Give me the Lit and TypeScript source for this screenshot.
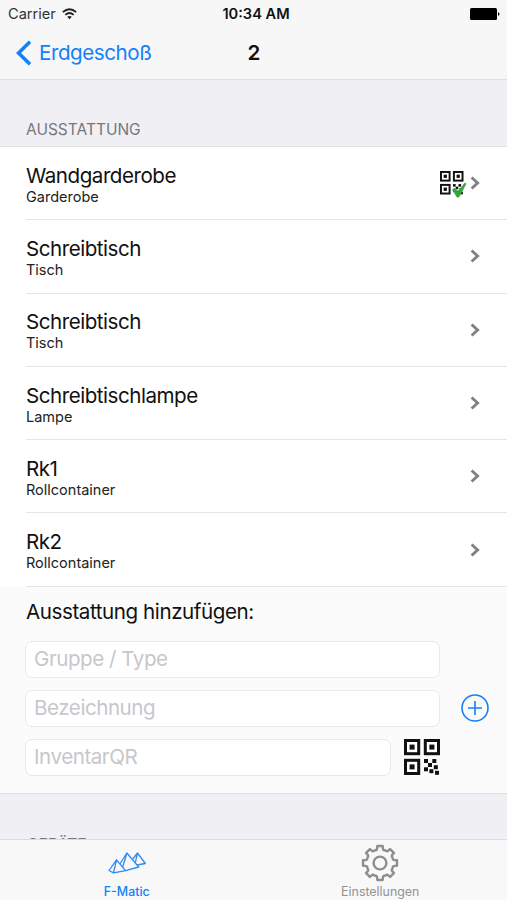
import { LitElement, html, css, svg } from "lit";
import { customElement, property } from "lit/decorators.js";

const gearPath = (() => {
  const n = 8;
  const p = (deg: number, r: number) => {
    const a = ((deg - 90) * Math.PI) / 180;
    return `${(19 + r * Math.cos(a)).toFixed(2)} ${(19 + r * Math.sin(a)).toFixed(2)}`;
  };
  let d = "";
  for (let i = 0; i < n; i++) {
    const a = (i * 360) / n;
    d += `${i ? "L" : "M"}${p(a - 9, 17.2)} L${p(a + 9, 17.2)} L${p(a + 11, 15)} Q${p(a + 14, 12.9)} ${p(a + 20, 13.6)} L${p(a + 25, 13.6)} Q${p(a + 31, 12.9)} ${p(a + 34, 15)} `;
  }
  return d + "Z";
})();

@customElement("qr-icon")
export class QrIcon extends LitElement {
  @property({ type: Number }) size = 36;
  @property({ type: Boolean }) checked = false;
  static styles = css`
    :host { display: block; flex: none; }
    svg { display: block; overflow: visible; }
  `;
  render() {
    const finder = (x: number, y: number) => svg`
      <rect x=${x + 1.5} y=${y + 1.5} width="13.2" height="13.2" fill="#fff" stroke="#111" stroke-width="3"/>
      <rect x=${x + 5.6} y=${y + 5.6} width="5" height="5" fill="#111"/>`;
    const dots = [[20, 20], [28.3, 20], [24, 24], [29.8, 26.2], [20, 28.3], [25.4, 30.2], [31, 31.8]];
    return html`<svg width=${this.size} height=${this.size} viewBox="0 0 36 36">
      ${finder(0, 0)}${finder(19.8, 0)}${finder(0, 19.8)}
      ${dots.map(([x, y]) => svg`<rect x=${x} y=${y} width="4" height="4" fill="#111"/>`)}
      ${this.checked
        ? svg`<path d="M19 28.5 L23 26.5 L27 32 L38 18.5 L40 19.5 L29 40 L26 40 Z" fill="#30a83a" stroke="#30a83a" stroke-width="1"/>`
        : null}
    </svg>`;
  }
}

@customElement("equipment-row")
export class EquipmentRow extends LitElement {
  @property() name = "";
  @property() kind = "";
  @property({ type: Boolean }) tagged = false;
  static styles = css`
    :host { display: flex; align-items: center; height: 73.3px; margin-left: 26px; padding-right: 27px; box-sizing: border-box; border-bottom: 1.3px solid #e5e5e7; }
    .text { flex: 1; padding-top: 1.2px; }
    .name { font-size: 20.6px; line-height: 25px; letter-spacing: -0.48px; color: #111; }
    .kind { font-size: 14.5px; line-height: 17px; color: #222; }
    qr-icon { margin-right: 6.5px; }
    svg { display: block; }
  `;
  render() {
    return html`
      <div class="text"><div class="name">${this.name}</div><div class="kind">${this.kind}</div></div>
      ${this.tagged ? html`<qr-icon size="23.5" checked></qr-icon>` : null}
      <svg width="10" height="14" viewBox="0 0 10 14"><path d="M1.6 1.5 L7.6 7 L1.6 12.5" fill="none" stroke="#808084" stroke-width="2.9"/></svg>`;
  }
}

@customElement("app-root")
export class AppRoot extends LitElement {
  static styles = css`
    :host { display: flex; flex-direction: column; height: 900px; width: 507px; overflow: hidden; background: #efeff4; font-family: Inter, "Liberation Sans", sans-serif; color: #111; box-sizing: border-box; }
    svg { display: block; flex: none; }
    .top { flex: none; height: 80px; box-sizing: border-box; background: #f7f7f8; border-bottom: 1.5px solid #dfdfe2; }
    .status { display: grid; grid-template-columns: 1fr auto 1fr; align-items: center; height: 27px; padding: 0 7px 0 8px; font-size: 14.6px; }
    .carrier { display: flex; align-items: center; gap: 6px; color: #333; }
    .time { font-weight: 600; padding-left: 4px; }
    .battery { justify-self: end; }
    .nav { display: grid; grid-template-columns: 1fr auto 1fr; align-items: center; height: 51px; padding: 0 15px 0 16px; font-size: 20.6px; }
    .back { display: flex; align-items: center; gap: 7px; color: #1580f8; letter-spacing: -0.45px; }
    .title { font-weight: 600; }
    .heading { flex: none; box-sizing: border-box; height: 67px; padding: 39.5px 26px 0; border-bottom: 1.3px solid #e2e2e6; font-size: 15.5px; line-height: 20px; color: #77777c; }
    .list { flex: none; background: #fff; }
    .form { flex: none; box-sizing: border-box; height: 207px; padding: 12px 0 0 25px; background: #fbfbfb; border-bottom: 1.3px solid #dfdfe2; }
    .label { font-size: 20.6px; line-height: 26px; padding-left: 1px; letter-spacing: -0.43px; }
    .body { display: flex; align-items: center; gap: 21px; margin-top: 16px; }
    .fields { display: flex; flex-direction: column; gap: 11.6px; width: 415px; }
    .pair { display: flex; align-items: center; gap: 13px; }
    .field { flex: none; box-sizing: border-box; height: 37.3px; border: 1.2px solid #e9e9eb; border-radius: 7px; background: #fff; padding: 0 8px; font-size: 20.6px; line-height: 34.4px; letter-spacing: -0.47px; color: #c7c7cc; }
    .pair .field { flex: 1; }
    .add { margin-bottom: 1px; }
    .rest { flex: 1; min-height: 0; overflow: hidden; padding: 41px 26px 0 27px; font-size: 15.5px; line-height: 20px; color: #77777c; }
    .tabs { flex: none; display: grid; grid-template-columns: 1fr 1fr; height: 61px; box-sizing: border-box; border-top: 1.5px solid #dcdce0; background: #f8f8f8; }
    .tab { display: flex; flex-direction: column; align-items: center; justify-content: space-between; padding: 4px 0 1px; font-size: 12.4px; line-height: 14px; color: #929292; }
    .active { color: #1580f8; font-weight: 500; }
  `;
  items = [
    { name: "Wandgarderobe", kind: "Garderobe", tagged: true },
    { name: "Schreibtisch", kind: "Tisch" },
    { name: "Schreibtisch", kind: "Tisch" },
    { name: "Schreibtischlampe", kind: "Lampe" },
    { name: "Rk1", kind: "Rollcontainer" },
    { name: "Rk2", kind: "Rollcontainer" },
  ];
  render() {
    return html`
      <header class="top">
        <div class="status">
          <div class="carrier"><span>Carrier</span>
            <svg width="15" height="12" viewBox="0 0 15 12" fill="none" stroke="#222" stroke-width="1.8"><path d="M.8 4.2 Q7.5 -1.8 14.2 4.2"/><path d="M3.3 6.9 Q7.5 3.2 11.7 6.9"/><path d="M7.5 11.2 L5.2 8.8 Q7.5 7 9.8 8.8 Z" fill="#222" stroke="none"/></svg>
          </div>
          <div class="time">10:34 AM</div>
          <svg class="battery" width="30" height="12" viewBox="0 0 30 12"><rect width="27" height="12" rx="1.5"/><path d="M28 4 Q31 6 28 8Z"/></svg>
        </div>
        <div class="nav">
          <div class="back"><svg width="16" height="26" viewBox="0 0 16 26"><path d="M14 1.8 L2.5 13 L14 24.2" fill="none" stroke="#1580f8" stroke-width="3.6"/></svg><span>Erdgeschoß</span></div>
          <div class="title">2</div>
        </div>
      </header>
      <div class="heading">AUSSTATTUNG</div>
      <div class="list">${this.items.map((i) => html`<equipment-row .name=${i.name} .kind=${i.kind} .tagged=${!!i.tagged}></equipment-row>`)}</div>
      <section class="form">
        <div class="label">Ausstattung hinzufügen:</div>
        <div class="body">
          <div class="fields">
            <div class="field">Gruppe / Type</div>
            <div class="field">Bezeichnung</div>
            <div class="pair"><div class="field">InventarQR</div><qr-icon size="36"></qr-icon></div>
          </div>
          <svg class="add" width="28" height="28" viewBox="0 0 28 28" fill="none" stroke="#1580f8" stroke-width="1.6"><circle cx="14" cy="14" r="13"/><path d="M14 7v14M7 14h14"/></svg>
        </div>
      </section>
      <div class="rest">GERÄTE</div>
      <nav class="tabs">
        <div class="tab active">
          <svg width="38" height="38" viewBox="0 0 38 38" fill="none" stroke="#2f8af5" stroke-width="1.3" stroke-linejoin="round"><path d="M8.5 15.8 L1 26.5 L5.5 28.8 L17.5 26.6 Z L5.5 28.8"/><path d="M11.8 20 L18.9 9 L30.7 23 L17.5 26.6 M18.9 9 L14.6 23.2"/><path d="M24.8 15 L29.5 9 L37.3 19.5 L29 21 M29.5 9 L27.4 18.4"/></svg>
          <span>F-Matic</span></div>
        <div class="tab">
          <svg width="38" height="38" viewBox="0 0 38 38" fill="none" stroke="#8e8e8e" stroke-width="2.4" stroke-linejoin="round"><path d=${gearPath}/><circle cx="19" cy="19" r="6.4"/></svg>
          <span>Einstellungen</span></div>
      </nav>`;
  }
}
